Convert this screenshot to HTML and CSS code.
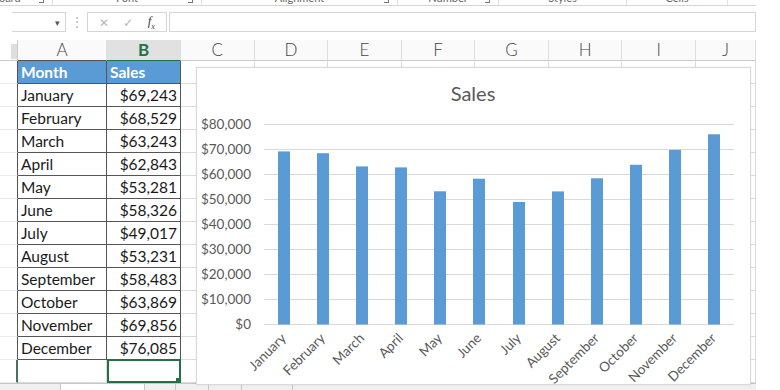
FILE: index.html
```html
<!DOCTYPE html>
<html lang="en">
<head>
    <meta charset="UTF-8">
    <meta name="viewport" content="width=device-width, initial-scale=1.0">
    <title>Sales - Excel</title>
    <link rel="stylesheet" href="styles.css">
</head>
<body>
    <div class="window">
        <div class="ribbon-groups">
            <div class="group g-clip"><span>Clipboard</span><i class="launcher"></i></div>
            <div class="group g-font"><span>Font</span><i class="launcher"></i></div>
            <div class="group g-align"><span>Alignment</span><i class="launcher"></i></div>
            <div class="group g-num"><span>Number</span><i class="launcher"></i></div>
            <div class="group g-style"><span>Styles</span></div>
            <div class="group g-cells"><span>Cells</span></div>
            <div class="group g-edit"></div>
        </div>

        <div class="formula-bar">
            <div class="name-box"><span class="caret">&#9662;</span></div>
            <div class="grip">&#8942;</div>
            <div class="fx-box">
                <span class="fx-btn">&#10005;</span>
                <span class="fx-btn">&#10003;</span>
                <span class="fx-btn fx">f<sub>x</sub></span>
            </div>
            <div class="formula-input"></div>
        </div>

        <div class="sheet">
            <table class="grid">
                <colgroup>
                    <col class="c-rh">
                    <col class="c-a">
                    <col class="c-b">
                    <col class="c-n"><col class="c-n"><col class="c-n"><col class="c-n">
                    <col class="c-n"><col class="c-n"><col class="c-n">
                    <col class="c-j">
                </colgroup>
                <thead>
                    <tr class="col-heads">
                        <th class="corner"><span></span></th>
                        <th class="edge-b">A</th>
                        <th class="edge-b active">B</th>
                        <th>C</th><th>D</th><th>E</th><th>F</th>
                        <th>G</th><th>H</th><th>I</th><th>J</th>
                    </tr>
                </thead>
                <tbody>
                    <tr>
                        <td class="rh edge-r"></td>
                        <td class="t head">Month</td>
                        <td class="t head">Sales</td>
                        <td></td><td></td><td></td><td></td><td></td><td></td><td></td><td></td>
                    </tr>
                    <tr>
                        <td class="rh edge-r"></td>
                        <td class="t">January</td>
                        <td class="t num">$69,243</td>
                        <td></td><td></td><td></td><td></td><td></td><td></td><td></td><td></td>
                    </tr>
                    <tr>
                        <td class="rh edge-r"></td>
                        <td class="t">February</td>
                        <td class="t num">$68,529</td>
                        <td></td><td></td><td></td><td></td><td></td><td></td><td></td><td></td>
                    </tr>
                    <tr>
                        <td class="rh edge-r"></td>
                        <td class="t">March</td>
                        <td class="t num">$63,243</td>
                        <td></td><td></td><td></td><td></td><td></td><td></td><td></td><td></td>
                    </tr>
                    <tr>
                        <td class="rh edge-r"></td>
                        <td class="t">April</td>
                        <td class="t num">$62,843</td>
                        <td></td><td></td><td></td><td></td><td></td><td></td><td></td><td></td>
                    </tr>
                    <tr>
                        <td class="rh edge-r"></td>
                        <td class="t">May</td>
                        <td class="t num">$53,281</td>
                        <td></td><td></td><td></td><td></td><td></td><td></td><td></td><td></td>
                    </tr>
                    <tr>
                        <td class="rh edge-r"></td>
                        <td class="t">June</td>
                        <td class="t num">$58,326</td>
                        <td></td><td></td><td></td><td></td><td></td><td></td><td></td><td></td>
                    </tr>
                    <tr>
                        <td class="rh edge-r"></td>
                        <td class="t">July</td>
                        <td class="t num">$49,017</td>
                        <td></td><td></td><td></td><td></td><td></td><td></td><td></td><td></td>
                    </tr>
                    <tr>
                        <td class="rh edge-r"></td>
                        <td class="t">August</td>
                        <td class="t num">$53,231</td>
                        <td></td><td></td><td></td><td></td><td></td><td></td><td></td><td></td>
                    </tr>
                    <tr>
                        <td class="rh edge-r"></td>
                        <td class="t">September</td>
                        <td class="t num">$58,483</td>
                        <td></td><td></td><td></td><td></td><td></td><td></td><td></td><td></td>
                    </tr>
                    <tr>
                        <td class="rh edge-r"></td>
                        <td class="t">October</td>
                        <td class="t num">$63,869</td>
                        <td></td><td></td><td></td><td></td><td></td><td></td><td></td><td></td>
                    </tr>
                    <tr>
                        <td class="rh edge-r"></td>
                        <td class="t">November</td>
                        <td class="t num">$69,856</td>
                        <td></td><td></td><td></td><td></td><td></td><td></td><td></td><td></td>
                    </tr>
                    <tr>
                        <td class="rh edge-r"></td>
                        <td class="t">December</td>
                        <td class="t num">$76,085</td>
                        <td></td><td></td><td></td><td></td><td></td><td></td><td></td><td></td>
                    </tr>
                    <tr class="active-row">
                        <td class="rh selected-r"></td>
                        <td></td>
                        <td class="selected"><i class="handle"></i></td>
                        <td></td><td></td><td></td><td></td><td></td><td></td><td></td><td></td>
                    </tr>
                </tbody>
            </table>

            <div class="chart">
                <svg width="555" height="318" viewBox="0 0 555 318">
                    <text class="title" x="277" y="34" text-anchor="middle">Sales</text>

                    <g class="gridlines">
                        <line x1="68" x2="538" y1="57.5" y2="57.5"/>
                        <line x1="68" x2="538" y1="82.5" y2="82.5"/>
                        <line x1="68" x2="538" y1="107.5" y2="107.5"/>
                        <line x1="68" x2="538" y1="132.5" y2="132.5"/>
                        <line x1="68" x2="538" y1="157.5" y2="157.5"/>
                        <line x1="68" x2="538" y1="182.5" y2="182.5"/>
                        <line x1="68" x2="538" y1="207.5" y2="207.5"/>
                        <line x1="68" x2="538" y1="232.5" y2="232.5"/>
                        <line x1="68" x2="538" y1="257.5" y2="257.5"/>
                    </g>

                    <g class="y-labels" text-anchor="end">
                        <text x="55" y="62">$80,000</text>
                        <text x="55" y="87">$70,000</text>
                        <text x="55" y="112">$60,000</text>
                        <text x="55" y="137">$50,000</text>
                        <text x="55" y="162">$40,000</text>
                        <text x="55" y="187">$30,000</text>
                        <text x="55" y="212">$20,000</text>
                        <text x="55" y="237">$10,000</text>
                        <text x="55" y="262">$0</text>
                    </g>

                    <g class="bars">
                        <rect x="82" y="84.4" width="12" height="173.1"/>
                        <rect x="121" y="86.2" width="12" height="171.3"/>
                        <rect x="160" y="99.4" width="12" height="158.1"/>
                        <rect x="199" y="100.4" width="12" height="157.1"/>
                        <rect x="238" y="124.3" width="12" height="133.2"/>
                        <rect x="277" y="111.7" width="12" height="145.8"/>
                        <rect x="317" y="135" width="12" height="122.5"/>
                        <rect x="356" y="124.4" width="12" height="133.1"/>
                        <rect x="395" y="111.3" width="12" height="146.2"/>
                        <rect x="434" y="97.8" width="12" height="159.7"/>
                        <rect x="473" y="82.9" width="12" height="174.6"/>
                        <rect x="512" y="67.3" width="12" height="190.2"/>
                    </g>

                    <g class="x-labels" text-anchor="end">
                        <text transform="translate(91 272) rotate(-45)">January</text>
                        <text transform="translate(130 272) rotate(-45)">February</text>
                        <text transform="translate(169 272) rotate(-45)">March</text>
                        <text transform="translate(208 272) rotate(-45)">April</text>
                        <text transform="translate(247 272) rotate(-45)">May</text>
                        <text transform="translate(286 272) rotate(-45)">June</text>
                        <text transform="translate(326 272) rotate(-45)">July</text>
                        <text transform="translate(365 272) rotate(-45)">August</text>
                        <text transform="translate(404 272) rotate(-45)">September</text>
                        <text transform="translate(443 272) rotate(-45)">October</text>
                        <text transform="translate(482 272) rotate(-45)">November</text>
                        <text transform="translate(521 272) rotate(-45)">December</text>
                    </g>
                </svg>
            </div>
        </div>

        <div class="sheet-tabs">
            <div class="tab-nav"></div>
            <div class="tab active-tab"></div>
            <div class="tab gap"></div>
            <div class="tab small"></div>
            <div class="tab small"></div>
            <div class="tab mid"></div>
        </div>
    </div>
</body>
</html>
```

FILE: styles.css
```css
body {
    margin: 0;
    background-color: white;
    font-family: Lato, "Liberation Sans", sans-serif;
    overflow: hidden;
}
.window {
    width: 756px;
    height: 390px;
    overflow: hidden;
}

/* ribbon group captions, mostly scrolled off the top */
.ribbon-groups {
    display: flex;
    height: 5px;
    border-bottom: 1px solid #d5d5d5;
    overflow: hidden;
    align-items: flex-end;
    margin-bottom: 6px;
}
.group {
    position: relative;
    display: flex;
    justify-content: center;
    align-items: flex-end;
    height: 14px;
    font-size: 11px;
    line-height: 14px;
    color: #666;
    border-right: 1px solid #e1e1e1;
    flex-shrink: 0;
}
.g-clip { width: 52px; justify-content: flex-start; }
.g-clip span { margin-left: -26px; }
.g-font { width: 148px; }
.g-align { width: 195px; }
.g-num { width: 100px; }
.g-style { width: 127px; }
.g-cells { width: 100px; }
.g-edit { width: 34px; border-right: none; }
.launcher {
    position: absolute;
    right: 8px;
    bottom: 2px;
    width: 4px;
    height: 4px;
    border-right: 1px solid #777;
    border-bottom: 1px solid #777;
}

/* formula bar */
.formula-bar {
    display: flex;
    align-items: stretch;
    height: 20px;
    padding-left: 12px;
    margin-bottom: 8px;
}
.name-box {
    width: 54px;
    border: 1px solid #d5d5d5;
    border-left: none;
    display: flex;
    justify-content: flex-end;
    align-items: center;
    padding-right: 5px;
    box-sizing: border-box;
}
.caret {
    font-size: 9px;
    color: #555;
}
.grip {
    width: 21px;
    text-align: center;
    font-size: 12px;
    line-height: 20px;
    color: #b0b0b0;
}
.fx-box {
    width: 80px;
    border: 1px solid #d5d5d5;
    display: flex;
    align-items: center;
    justify-content: space-around;
    padding: 0 4px;
    box-sizing: border-box;
}
.fx-btn {
    font-size: 12px;
    color: #b8b8b8;
}
.fx {
    font-family: "Liberation Serif", serif;
    font-style: italic;
    color: #444;
    font-size: 13px;
}
.fx sub {
    font-size: 8px;
}
.formula-input {
    flex: 1;
    margin-left: 2px;
    border: 1px solid #d5d5d5;
}

/* worksheet */
.sheet {
    position: relative;
}
.grid {
    width: 756px;
    table-layout: fixed;
    border-collapse: separate;
    border-spacing: 0;
    font-size: 15.5px;
    color: #1a1a1a;
}
.c-rh { width: 18px; }
.c-a { width: 89px; }
.c-b { width: 74px; }
.c-n { width: 73.5px; }
.c-j { width: 60px; }
.grid th,
.grid td {
    padding: 0 3px;
    border-right: 1px solid #dcdcdc;
    border-bottom: 1px solid #dcdcdc;
    box-sizing: border-box;
    white-space: nowrap;
    overflow: hidden;
}
.col-heads {
    height: 21px;
}
.col-heads th {
    font-weight: 300;
    font-size: 17px;
    line-height: 20px;
    color: #444;
    background-color: #fafafa;
    border-bottom-color: #c9c9c9;
    border-right-color: #dedede;
}
.col-heads .corner {
    position: relative;
    background-color: white;
    border-right-color: #c9c9c9;
}
.corner span {
    position: absolute;
    right: 0;
    top: 4px;
    width: 6px;
    height: 15px;
    background-color: #dedede;
}
.col-heads .edge-b {
    border-bottom-color: #555;
}
.col-heads .active {
    background-color: #e1e1e1;
    color: #217346;
    font-weight: bold;
    border-bottom: 1px solid #217346;
}
.grid tbody tr {
    height: 23px;
}
.grid .rh {
    padding: 0;
    border-bottom-color: #ececec;
}
.grid .edge-r {
    border-right-color: #555;
}
.grid .t {
    border-right-color: #555;
    border-bottom-color: #555;
}
.grid .head {
    background-color: #5b9bd5;
    color: white;
    font-weight: bold;
}
.grid .num {
    text-align: right;
}
.grid .selected-r {
    border-right: 2px solid #46735a;
}
.grid .selected {
    position: relative;
    border: 2px solid #217346;
    border-top-width: 1px;
}
.handle {
    position: absolute;
    right: -3px;
    bottom: -3px;
    width: 5px;
    height: 5px;
    background-color: #217346;
    border: 1px solid white;
}

/* embedded chart */
.chart {
    position: absolute;
    left: 196px;
    top: 27px;
    width: 555px;
    height: 318px;
    background-color: white;
    border: 1px solid #d9d9d9;
    box-sizing: border-box;
    box-shadow: 0 0 2px rgba(0,0,0,0.08);
}
.chart svg {
    display: block;
    margin: -1px;
    font-family: Lato, "Liberation Sans", sans-serif;
}
.title {
    font-size: 20px;
    fill: #595959;
}
.gridlines line {
    stroke: #d9d9d9;
    stroke-width: 1;
}
.y-labels {
    font-size: 13.5px;
    fill: #595959;
}
.x-labels {
    font-size: 13.5px;
    fill: #595959;
}
.bars rect {
    fill: #5b9bd5;
}

/* sheet tabs strip */
.sheet-tabs {
    display: flex;
    height: 8px;
    background-color: #f0f0f0;
    border-top: 1px solid #c6c6c6;
}
.tab-nav { width: 60px; }
.tab {
    border-right: 1px solid #c6c6c6;
}
.active-tab {
    width: 83px;
    background-color: white;
    border-left: 1px solid #c6c6c6;
}
.gap { width: 30px; }
.small { width: 32px; }
.mid { width: 50px; }
```
